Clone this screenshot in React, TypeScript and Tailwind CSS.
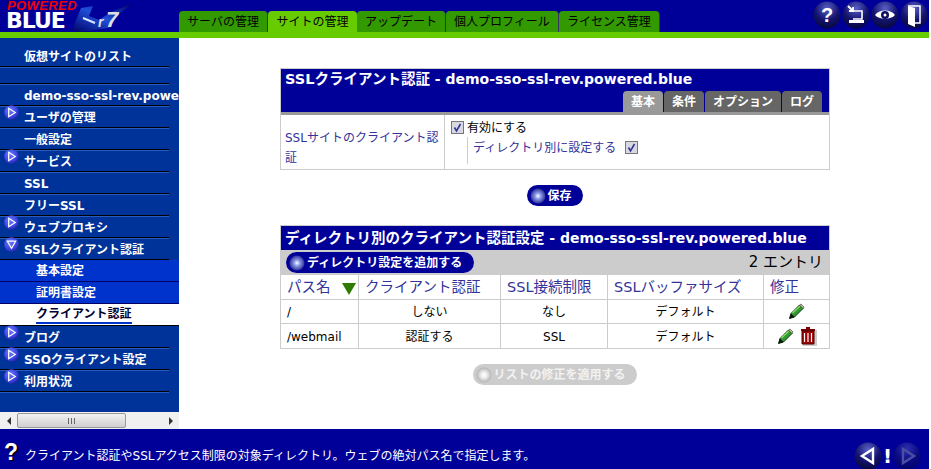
import React from "react";

const F = { fontFamily: '"DejaVu Sans","Noto Sans CJK JP",sans-serif' };

function Arrow({ down }: { down?: boolean }) {
  return (
    <svg width="15" height="15" viewBox="0 0 16 16" className="shrink-0">
      <defs>
        <radialGradient id="ball" cx="40%" cy="35%" r="75%">
          <stop offset="0%" stopColor="#6a7cff" />
          <stop offset="65%" stopColor="#3a40e0" />
          <stop offset="100%" stopColor="#141a80" />
        </radialGradient>
      </defs>
      <circle cx="8" cy="8" r="7.8" fill="url(#ball)" />
      {down ? (
        <path d="M3.5 4.5H12.5L8 12Z" fill="none" stroke="#fff" strokeWidth="1.3" />
      ) : (
        <path d="M5 3.5V12.5L12 8Z" fill="none" stroke="#fff" strokeWidth="1.3" />
      )}
    </svg>
  );
}

function Row({ text, arrow, down, noLine }: { text?: string; arrow?: boolean; down?: boolean; noLine?: boolean }) {
  return (
    <div className="h-[22px] w-[169px] relative border-b border-b-black flex items-center pt-[2px]">
      <div className="w-[4px] shrink-0" />
      <div className="w-[20px] shrink-0 -mt-[10px]">{arrow && <Arrow down={down} />}</div>
      <span className="text-[12px] font-bold text-white whitespace-nowrap">{text}</span>
      {!noLine && <div className="absolute left-0 right-0 -bottom-[2px] h-px bg-[#2a5cc0]" />}
    </div>
  );
}

function Sub({ text, active }: { text: string; active?: boolean }) {
  return (
    <div className={`h-[22px] w-[179px] flex items-center pl-[36px] pt-[1px] border-b ${active ? "bg-white border-b-black" : "bg-[#0033cc] border-b-[#000066]"}`}>
      <span className={`text-[12px] font-bold ${active ? "text-[#000033] border-b-2 border-b-[#0033cc] leading-[15px]" : "text-white"}`}>{text}</span>
    </div>
  );
}

function Orb({ children, dim }: { children: React.ReactNode; dim?: boolean }) {
  return (
    <svg width="28" height="28" viewBox="0 0 28 28" className={dim ? "opacity-50" : ""}>
      <defs>
        <radialGradient id="orb" cx="50%" cy="25%" r="80%">
          <stop offset="0%" stopColor="#5a60c8" />
          <stop offset="55%" stopColor="#14146e" />
          <stop offset="100%" stopColor="#050535" />
        </radialGradient>
      </defs>
      <circle cx="14" cy="14" r="13.5" fill="url(#orb)" />
      {children}
    </svg>
  );
}

function Btn({ label, disabled, cls }: { label: string; disabled?: boolean; cls?: string }) {
  return (
    <div className={`h-[21px] rounded-full flex items-center pl-[3px] pr-[10px] ${disabled ? "bg-[#cccccc]" : "bg-[#000099]"} ${cls ?? ""}`}>
      <svg width="16" height="16" viewBox="0 0 16 16" className="shrink-0 mr-[2px]">
        <defs>
          <radialGradient id={disabled ? "bd" : "be"} cx="50%" cy="50%" r="55%">
            <stop offset="0%" stopColor="#fff" />
            <stop offset="35%" stopColor={disabled ? "#eeeeee" : "#8c9ce8"} />
            <stop offset="100%" stopColor={disabled ? "#aaaaaa" : "#20208c"} />
          </radialGradient>
        </defs>
        <circle cx="8" cy="8" r="7.5" fill={`url(#${disabled ? "bd" : "be"})`} />
      </svg>
      <span className={`text-[12px] font-bold whitespace-nowrap ${disabled ? "text-[#f2f2f2]" : "text-white"}`}>{label}</span>
    </div>
  );
}

function Check() {
  return (
    <svg width="13" height="13" viewBox="0 0 13 13" className="shrink-0">
      <rect x="0.5" y="0.5" width="12" height="12" fill="#d8d8e0" stroke="#777" />
      <path d="M3.5 6.5L5.5 10L9.5 3" fill="none" stroke="#333399" strokeWidth="1.6" />
    </svg>
  );
}

function Pencil() {
  return (
    <svg width="17" height="17" viewBox="0 0 17 17">
      <path d="M1.5 15.5L3 10.5L11.5 2L15 5.5L6.5 14Z" fill="#2e9a2e" stroke="#0b3a0b" />
      <path d="M4.5 10L12 3" stroke="#8fdc6f" strokeWidth="1.2" />
      <path d="M11.5 2L13 1L16 4L15 5.5Z" fill="#c9c9a0" stroke="#333" strokeWidth="0.6" />
      <path d="M1.5 15.5L3 10.5L6.5 14Z" fill="#111" />
    </svg>
  );
}

function Trash() {
  return (
    <svg width="17" height="20" viewBox="0 0 17 20">
      <rect x="3" y="4" width="14" height="16" fill="#ccc" />
      <path d="M1 3H15V5H1Z" fill="#7a0000" />
      <path d="M6 1H10V3H6Z" fill="#7a0000" />
      <path d="M2 5H14V18H2Z" fill="#a00000" stroke="#500000" />
      <path d="M4.5 7V16M8 7V16M11.5 7V16" stroke="#fff" strokeWidth="1.2" />
    </svg>
  );
}

const tabs = ["サーバの管理", "サイトの管理", "アップデート", "個人プロフィール", "ライセンス管理"];
const tabW = ["w-[89px]", "w-[89px]", "w-[89px]", "w-[113px]", "w-[101px]"];
const subTabs = [
  { t: "基本", w: "w-[40px]", on: true },
  { t: "条件", w: "w-[40px]" },
  { t: "オプション", w: "w-[76px]" },
  { t: "ログ", w: "w-[40px]" },
];

export default function App() {
  return (
    <div style={F} className="w-[929px] h-[469px] flex flex-col bg-white overflow-hidden">
      <header className="h-[32px] bg-[#000099] flex shrink-0">
        <div className="w-[179px] relative shrink-0 overflow-hidden">
          <span className="absolute left-[7px] top-[0px] text-[13px] font-bold italic text-[#ee0000] leading-[12px] tracking-[0.4px]" style={{ fontFamily: '"Liberation Sans",sans-serif' }}>POWERED</span>
          <span className="absolute left-[6px] top-[12px] text-[22px] text-white leading-[18px] tracking-[-1px]" style={{ fontFamily: '"DejaVu Sans",sans-serif', fontWeight: 900 }}>BLUE</span>
          <svg width="66" height="30" viewBox="0 0 66 30" className="absolute left-[71px] top-[2px]">
            <defs>
              <linearGradient id="sw" x1="0" y1="1" x2="1" y2="0">
                <stop offset="0%" stopColor="#000066" />
                <stop offset="50%" stopColor="#1f4fd8" />
                <stop offset="100%" stopColor="#000066" />
              </linearGradient>
            </defs>
            <path d="M1 28L10 6L22 4L18 14L28 18L40 10L62 1L48 12L38 26L8 30Z" fill="url(#sw)" />
            <path d="M12 16L24 21" stroke="#d8e6ff" strokeWidth="2" />
          </svg>
          <span className="absolute left-[98px] top-[14px] text-[14px] font-bold italic text-[#dddddd] leading-[16px]" style={{ fontFamily: '"Liberation Sans",sans-serif' }}>r</span>
          <span className="absolute left-[106px] top-[9px] text-[22px] font-bold italic text-[#dddddd] leading-[22px]" style={{ fontFamily: '"Liberation Sans",sans-serif' }}>7</span>
        </div>
        <nav className="flex items-end w-[494px] h-[32px]">
          {tabs.map((t, i) => (
            <div key={t} className={`${tabW[i]} ${i === 1 ? "bg-[#66cc00]" : "bg-[#339900] border-r border-r-[#333366]"} h-[21px] rounded-t-[4px] flex items-center justify-center text-[12px] text-black whitespace-nowrap`}>
              {t}
            </div>
          ))}
        </nav>
        <div className="flex-1 flex items-start justify-end gap-[1px] pt-[1px] pr-[1px]">
          <Orb><text x="14" y="21" textAnchor="middle" fontSize="20" fontWeight="bold" fill="#fff" fontFamily="Liberation Sans">?</text></Orb>
          <Orb>
            <path d="M6 5L11 10M11 6V10H7" stroke="#fff" strokeWidth="1.8" fill="none" />
            <path d="M11 10H20V18H11" fill="none" stroke="#fff" strokeWidth="1.6" />
            <path d="M7 19H22V22H7Z" fill="#fff" />
          </Orb>
          <Orb>
            <path d="M4 14C8 8 20 8 24 14C20 19 8 19 4 14Z" fill="#fff" />
            <circle cx="14" cy="14" r="4" fill="#101060" />
            <circle cx="14" cy="14" r="1.5" fill="#fff" />
          </Orb>
          <Orb>
            <path d="M8 5H20V22H15" fill="none" stroke="#fff" strokeWidth="1.5" />
            <path d="M8 5L15 7V26L8 23Z" fill="#fff" />
          </Orb>
        </div>
      </header>
      <div className="h-[6px] bg-[#66cc00] shrink-0" />
      <div className="flex flex-1 min-h-0">
        <aside className="w-[179px] bg-[#003399] flex flex-col shrink-0 overflow-hidden">
          <div className="flex-1 overflow-hidden pt-[7px]">
            <Row text="仮想サイトのリスト" />
            <div className="h-[17px] w-[169px] border-b border-b-black relative"><div className="absolute left-0 right-0 -bottom-[2px] h-px bg-[#2a5cc0]" /></div>
            <Row text="demo-sso-ssl-rev.powered.blue" />
            <Row text="ユーザの管理" arrow />
            <Row text="一般設定" />
            <Row text="サービス" arrow />
            <Row text="SSL" />
            <Row text="フリーSSL" />
            <Row text="ウェブプロキシ" arrow />
            <Row text="SSLクライアント認証" arrow down noLine />
            <Sub text="基本設定" />
            <Sub text="証明書設定" />
            <Sub text="クライアント認証" active />
            <Row text="ブログ" arrow />
            <Row text="SSOクライアント設定" arrow />
            <Row text="利用状況" arrow />
          </div>
          <div className="h-[17px] bg-[#f0f0f0] flex items-center shrink-0">
            <div className="w-[17px] flex justify-center"><div className="border-y-[4px] border-y-transparent border-r-[4px] border-r-[#333]" /></div>
            <div className="w-[109px] h-[15px] rounded-[2px] border border-[#999] bg-linear-to-b from-[#f2f2f2] to-[#d0d0d0] flex items-center justify-center gap-[1px]">
              <i className="w-px h-[6px] bg-[#666]" /><i className="w-px h-[6px] bg-[#666] ml-[1px]" /><i className="w-px h-[6px] bg-[#666] ml-[1px]" />
            </div>
            <div className="flex-1" />
            <div className="w-[17px] flex justify-center"><div className="border-y-[4px] border-y-transparent border-l-[4px] border-l-[#333]" /></div>
          </div>
        </aside>
        <main className="flex-1 flex flex-col items-start pl-[101px] pt-[30px]">
          <section className="w-[550px] border border-[#cccccc] h-[102px]">
            <div className="h-[43px] box-content bg-[#000099] border-b-[3px] border-b-[#999999] flex flex-col">
              <div className="font-bold text-white pl-[4px] h-[22px] leading-[20px] whitespace-nowrap"><span className="text-[14.5px]">SSLクライアント認証</span><span className="text-[14px]"> - demo-sso-ssl-rev.powered.blue</span></div>
              <div className="flex justify-end gap-[1px] pr-[7px] h-[21px]">
                {subTabs.map((s) => (
                  <div key={s.t} className={`${s.w} ${s.on ? "bg-[#999999]" : "bg-[#666666]"} rounded-t-[4px] flex items-center justify-center text-[12px] font-bold text-white`}>{s.t}</div>
                ))}
              </div>
            </div>
            <div className="flex h-[54px]">
              <div className="w-[164px] border-r border-r-[#cccccc] pl-[4px] pt-[13px] text-[12px] leading-[20px] text-[#333399]">SSLサイトのクライアント認証</div>
              <div className="flex-1 pl-[6px] pt-[5px]">
                <div className="flex items-center gap-[3px] text-[12px] text-black h-[15px]"><Check />有効にする</div>
                <div className="ml-[16px] mt-[2px] pl-[5px] h-[27px] border-l border-l-[#cccccc] flex items-center gap-[9px] text-[12px] text-[#333399] pb-[6px]">ディレクトリ別に設定する <Check /></div>
              </div>
            </div>
          </section>
          <div className="w-[550px] flex justify-center mt-[15px] pr-[1px]"><Btn label="保存" cls="w-[56px]" /></div>
          <section className="w-[550px] mt-[19px] border border-[#cccccc]">
            <div className="h-[24px] bg-[#000099] font-bold text-white pl-[4px] leading-[24px] whitespace-nowrap"><span className="text-[14.5px]">ディレクトリ別のクライアント認証設定</span><span className="text-[14px]"> - demo-sso-ssl-rev.powered.blue</span></div>
            <div className="h-[25px] bg-[#cccccc] flex items-center justify-between pl-[5px] pr-[6px]">
              <Btn label="ディレクトリ設定を追加する" cls="w-[188px]" />
              <span className="text-[15px] text-black">2 エントリ</span>
            </div>
            <div className="grid grid-cols-[78px_142px_107px_156px_1fr] text-[12px] text-black">
              {["パス名", "クライアント認証", "SSL接続制限", "SSLバッファサイズ", "修正"].map((h, i) => (
                <div key={h} className={`h-[25px] border-b border-b-[#cccccc] ${i < 4 ? "border-r border-r-[#cccccc]" : ""} pl-[6px] pt-[2px] flex items-center text-[14.5px] text-[#333399] whitespace-nowrap relative`}>
                  {h}
                  {i === 0 && <svg width="14" height="12" viewBox="0 0 14 12" className="absolute left-[61px] top-[8px]"><path d="M0 0H14L7 12Z" fill="#2f7a00" /></svg>}
                </div>
              ))}
              <div className="h-[24px] border-b border-r border-[#cccccc] pl-[6px] pt-[1px] flex items-center">/</div>
              <div className="h-[24px] border-b border-r border-[#cccccc] pt-[1px] flex items-center justify-center">しない</div>
              <div className="h-[24px] border-b border-r border-[#cccccc] pt-[1px] flex items-center justify-center">なし</div>
              <div className="h-[24px] border-b border-r border-[#cccccc] pt-[1px] flex items-center justify-center">デフォルト</div>
              <div className="h-[24px] border-b border-[#cccccc] flex items-center justify-center gap-[4px]"><Pencil /></div>
              <div className="h-[24px] border-r border-[#cccccc] pl-[6px] pt-[1px] flex items-center">/webmail</div>
              <div className="h-[24px] border-r border-[#cccccc] pt-[1px] flex items-center justify-center">認証する</div>
              <div className="h-[24px] border-r border-[#cccccc] pt-[1px] flex items-center justify-center">SSL</div>
              <div className="h-[24px] border-r border-[#cccccc] pt-[1px] flex items-center justify-center">デフォルト</div>
              <div className="h-[24px] flex items-center justify-center gap-[6px]"><Pencil /><Trash /></div>
            </div>
          </section>
          <div className="w-[550px] flex justify-center mt-[15px] pr-[1px]"><Btn label="リストの修正を適用する" disabled cls="w-[164px]" /></div>
        </main>
      </div>
      <footer className="h-[40px] bg-[#000099] flex items-center shrink-0 pl-[4px] pr-[8px] pt-[13px]">
        <span className="text-[23px] font-bold text-white w-[21px] leading-none -mt-[7px]" style={{ fontFamily: '"Liberation Sans",sans-serif', textShadow: "2px 1px 0 #000" }}>?</span>
        <span className="text-[12px] text-white flex-1">クライアント認証やSSLアクセス制限の対象ディレクトリ。ウェブの絶対パス名で指定します。</span>
        <Orb><path d="M19 7V21L8 14Z" fill="none" stroke="#fff" strokeWidth="2.4" /></Orb>
        <span className="text-[20px] font-bold text-white mx-[1px] leading-none">!</span>
        <Orb dim><path d="M10 7V21L21 14Z" fill="none" stroke="#99a" strokeWidth="2.4" /></Orb>
      </footer>
    </div>
  );
}
